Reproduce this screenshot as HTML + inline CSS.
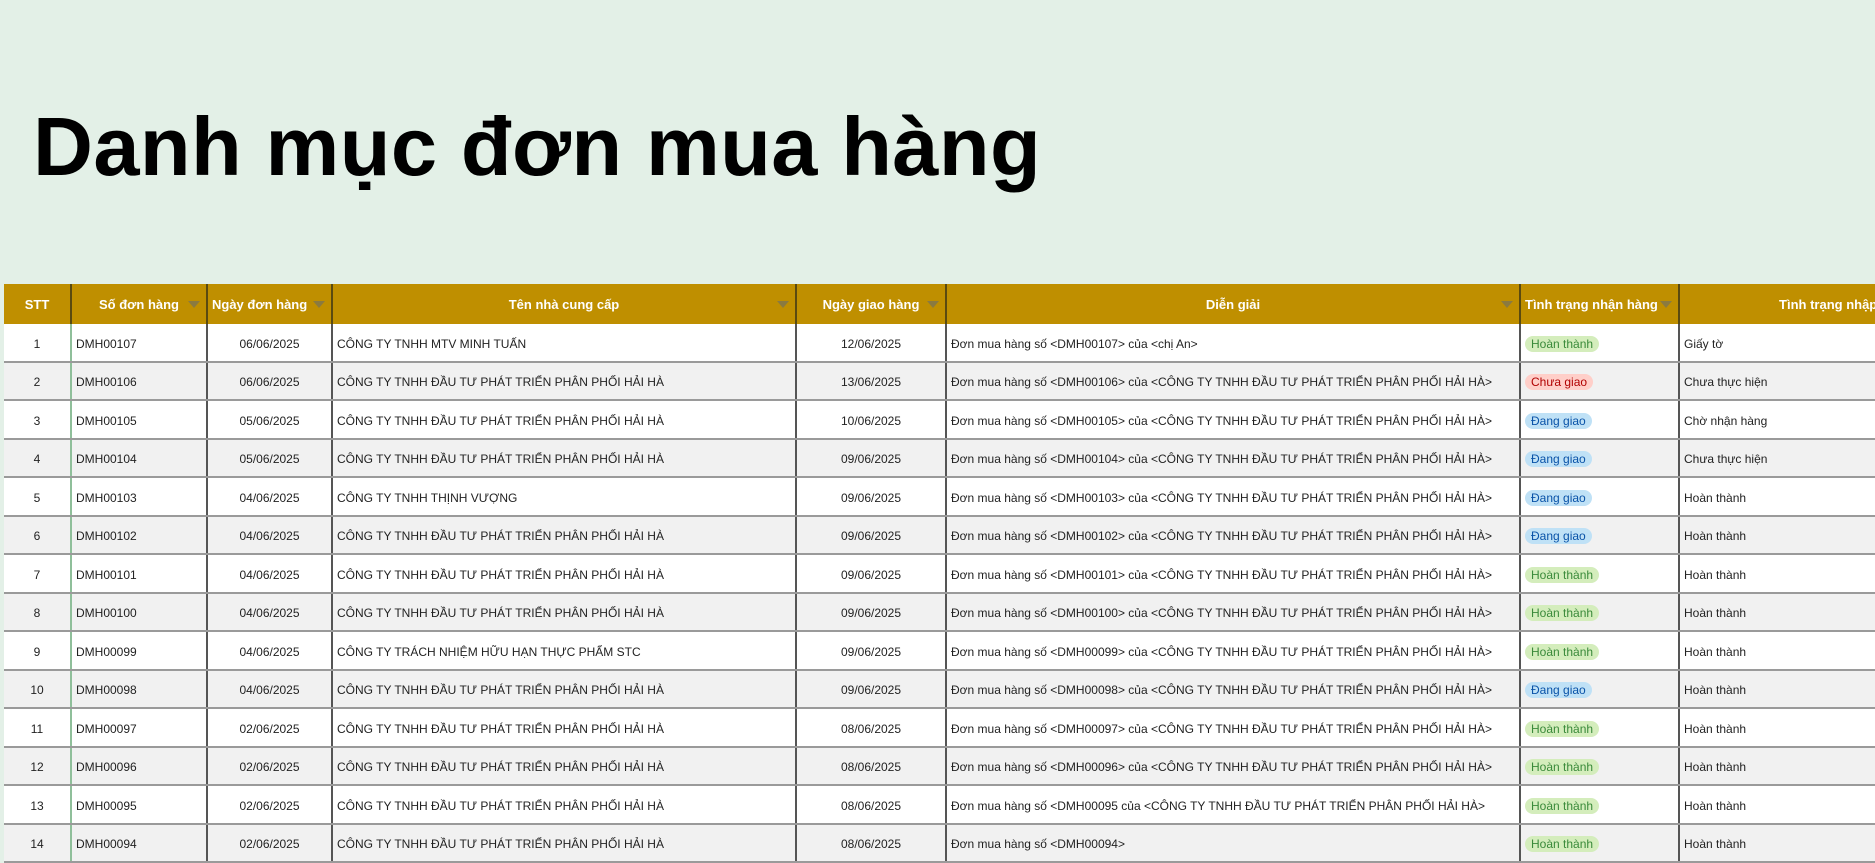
<!DOCTYPE html>
<html><head><meta charset="utf-8"><style>
body{margin:0;width:1875px;height:833px;overflow:hidden;background:#e3f0e7;font-family:"Liberation Sans",sans-serif;position:relative}
h1{position:absolute;left:33px;top:99px;margin:0;font-size:83px;font-weight:bold;color:#000;letter-spacing:0.4px;white-space:nowrap}
table{position:absolute;left:4px;top:284px;border-collapse:collapse;table-layout:fixed;width:2000px;font-size:12px;color:#222}
th{background:#bf8f00;color:#fff;height:40px;font-weight:bold;font-size:13px;border-right:2px solid #5a4a10;position:relative;padding:0 4px;white-space:nowrap;overflow:hidden}
th.f::after{content:"";position:absolute;right:6px;top:17px;border-left:6px solid transparent;border-right:6px solid transparent;border-top:7px solid #8a7a40}
td{height:33.5px;padding-top:3px;padding-bottom:0;border-bottom:2px solid #9a9a9a;border-right:2px solid #555;padding-left:4px;padding-right:4px;white-space:nowrap;overflow:hidden;background:#fff}
tr:nth-child(odd) td{background:#f1f1f1}
td.c{text-align:center}
td:first-child{border-right:2px solid #8fbf9a}
.p{display:inline-block;padding:1px 6px;border-radius:8px;font-size:12px}
.h{background:#d4edbc;color:#3a8a3a}.x{background:#ffcfc9;color:#b10202}.d{background:#bfe1f6;color:#0a53a8}
</style></head><body>
<h1>Danh mục đơn mua hàng</h1>
<table>
<colgroup><col style="width:67px"><col style="width:136px"><col style="width:125px"><col style="width:464px"><col style="width:150px"><col style="width:574px"><col style="width:159px"><col style="width:325px"></colgroup>
<tr><th>STT</th><th class="f">Số đơn hàng</th><th class="f" style="text-align:left">Ngày đơn hàng</th><th class="f">Tên nhà cung cấp</th><th class="f">Ngày giao hàng</th><th class="f">Diễn giải</th><th class="f" style="text-align:left">Tình trạng nhận hàng</th><th>Tình trạng nhập kho</th></tr>
<tr><td class="c">1</td><td>DMH00107</td><td class="c">06/06/2025</td><td>CÔNG TY TNHH MTV MINH TUẤN</td><td class="c">12/06/2025</td><td>Đơn mua hàng số &lt;DMH00107&gt; của &lt;chị An&gt;</td><td><span class="p h">Hoàn thành</span></td><td>Giấy tờ</td></tr>
<tr><td class="c">2</td><td>DMH00106</td><td class="c">06/06/2025</td><td>CÔNG TY TNHH ĐẦU TƯ PHÁT TRIỂN PHÂN PHỐI HẢI HÀ</td><td class="c">13/06/2025</td><td>Đơn mua hàng số &lt;DMH00106&gt; của &lt;CÔNG TY TNHH ĐẦU TƯ PHÁT TRIỂN PHÂN PHỐI HẢI HÀ&gt;</td><td><span class="p x">Chưa giao</span></td><td>Chưa thực hiện</td></tr>
<tr><td class="c">3</td><td>DMH00105</td><td class="c">05/06/2025</td><td>CÔNG TY TNHH ĐẦU TƯ PHÁT TRIỂN PHÂN PHỐI HẢI HÀ</td><td class="c">10/06/2025</td><td>Đơn mua hàng số &lt;DMH00105&gt; của &lt;CÔNG TY TNHH ĐẦU TƯ PHÁT TRIỂN PHÂN PHỐI HẢI HÀ&gt;</td><td><span class="p d">Đang giao</span></td><td>Chờ nhận hàng</td></tr>
<tr><td class="c">4</td><td>DMH00104</td><td class="c">05/06/2025</td><td>CÔNG TY TNHH ĐẦU TƯ PHÁT TRIỂN PHÂN PHỐI HẢI HÀ</td><td class="c">09/06/2025</td><td>Đơn mua hàng số &lt;DMH00104&gt; của &lt;CÔNG TY TNHH ĐẦU TƯ PHÁT TRIỂN PHÂN PHỐI HẢI HÀ&gt;</td><td><span class="p d">Đang giao</span></td><td>Chưa thực hiện</td></tr>
<tr><td class="c">5</td><td>DMH00103</td><td class="c">04/06/2025</td><td>CÔNG TY TNHH THỊNH VƯỢNG</td><td class="c">09/06/2025</td><td>Đơn mua hàng số &lt;DMH00103&gt; của &lt;CÔNG TY TNHH ĐẦU TƯ PHÁT TRIỂN PHÂN PHỐI HẢI HÀ&gt;</td><td><span class="p d">Đang giao</span></td><td>Hoàn thành</td></tr>
<tr><td class="c">6</td><td>DMH00102</td><td class="c">04/06/2025</td><td>CÔNG TY TNHH ĐẦU TƯ PHÁT TRIỂN PHÂN PHỐI HẢI HÀ</td><td class="c">09/06/2025</td><td>Đơn mua hàng số &lt;DMH00102&gt; của &lt;CÔNG TY TNHH ĐẦU TƯ PHÁT TRIỂN PHÂN PHỐI HẢI HÀ&gt;</td><td><span class="p d">Đang giao</span></td><td>Hoàn thành</td></tr>
<tr><td class="c">7</td><td>DMH00101</td><td class="c">04/06/2025</td><td>CÔNG TY TNHH ĐẦU TƯ PHÁT TRIỂN PHÂN PHỐI HẢI HÀ</td><td class="c">09/06/2025</td><td>Đơn mua hàng số &lt;DMH00101&gt; của &lt;CÔNG TY TNHH ĐẦU TƯ PHÁT TRIỂN PHÂN PHỐI HẢI HÀ&gt;</td><td><span class="p h">Hoàn thành</span></td><td>Hoàn thành</td></tr>
<tr><td class="c">8</td><td>DMH00100</td><td class="c">04/06/2025</td><td>CÔNG TY TNHH ĐẦU TƯ PHÁT TRIỂN PHÂN PHỐI HẢI HÀ</td><td class="c">09/06/2025</td><td>Đơn mua hàng số &lt;DMH00100&gt; của &lt;CÔNG TY TNHH ĐẦU TƯ PHÁT TRIỂN PHÂN PHỐI HẢI HÀ&gt;</td><td><span class="p h">Hoàn thành</span></td><td>Hoàn thành</td></tr>
<tr><td class="c">9</td><td>DMH00099</td><td class="c">04/06/2025</td><td>CÔNG TY TRÁCH NHIỆM HỮU HẠN THỰC PHẨM STC</td><td class="c">09/06/2025</td><td>Đơn mua hàng số &lt;DMH00099&gt; của &lt;CÔNG TY TNHH ĐẦU TƯ PHÁT TRIỂN PHÂN PHỐI HẢI HÀ&gt;</td><td><span class="p h">Hoàn thành</span></td><td>Hoàn thành</td></tr>
<tr><td class="c">10</td><td>DMH00098</td><td class="c">04/06/2025</td><td>CÔNG TY TNHH ĐẦU TƯ PHÁT TRIỂN PHÂN PHỐI HẢI HÀ</td><td class="c">09/06/2025</td><td>Đơn mua hàng số &lt;DMH00098&gt; của &lt;CÔNG TY TNHH ĐẦU TƯ PHÁT TRIỂN PHÂN PHỐI HẢI HÀ&gt;</td><td><span class="p d">Đang giao</span></td><td>Hoàn thành</td></tr>
<tr><td class="c">11</td><td>DMH00097</td><td class="c">02/06/2025</td><td>CÔNG TY TNHH ĐẦU TƯ PHÁT TRIỂN PHÂN PHỐI HẢI HÀ</td><td class="c">08/06/2025</td><td>Đơn mua hàng số &lt;DMH00097&gt; của &lt;CÔNG TY TNHH ĐẦU TƯ PHÁT TRIỂN PHÂN PHỐI HẢI HÀ&gt;</td><td><span class="p h">Hoàn thành</span></td><td>Hoàn thành</td></tr>
<tr><td class="c">12</td><td>DMH00096</td><td class="c">02/06/2025</td><td>CÔNG TY TNHH ĐẦU TƯ PHÁT TRIỂN PHÂN PHỐI HẢI HÀ</td><td class="c">08/06/2025</td><td>Đơn mua hàng số &lt;DMH00096&gt; của &lt;CÔNG TY TNHH ĐẦU TƯ PHÁT TRIỂN PHÂN PHỐI HẢI HÀ&gt;</td><td><span class="p h">Hoàn thành</span></td><td>Hoàn thành</td></tr>
<tr><td class="c">13</td><td>DMH00095</td><td class="c">02/06/2025</td><td>CÔNG TY TNHH ĐẦU TƯ PHÁT TRIỂN PHÂN PHỐI HẢI HÀ</td><td class="c">08/06/2025</td><td>Đơn mua hàng số &lt;DMH00095 của &lt;CÔNG TY TNHH ĐẦU TƯ PHÁT TRIỂN PHÂN PHỐI HẢI HÀ&gt;</td><td><span class="p h">Hoàn thành</span></td><td>Hoàn thành</td></tr>
<tr><td class="c">14</td><td>DMH00094</td><td class="c">02/06/2025</td><td>CÔNG TY TNHH ĐẦU TƯ PHÁT TRIỂN PHÂN PHỐI HẢI HÀ</td><td class="c">08/06/2025</td><td>Đơn mua hàng số &lt;DMH00094&gt;</td><td><span class="p h">Hoàn thành</span></td><td>Hoàn thành</td></tr>
</table>
</body></html>
